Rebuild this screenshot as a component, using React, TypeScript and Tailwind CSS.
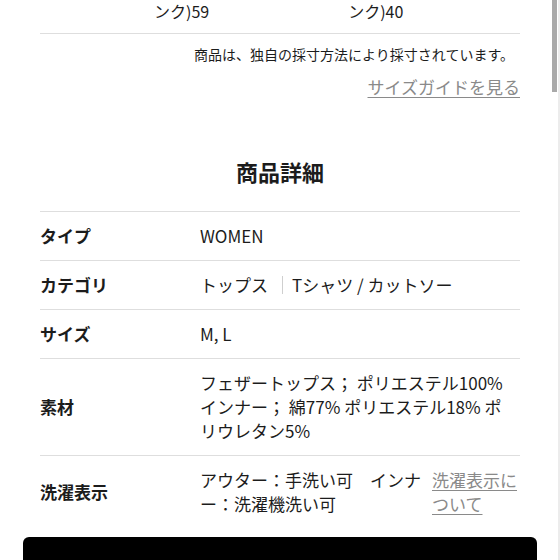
import React from 'react';

const rows: { label: string; value: React.ReactNode; link?: string }[] = [
  { label: 'タイプ', value: 'WOMEN' },
  {
    label: 'カテゴリ',
    value: (
      <span className="flex items-center">
        <span>トップス</span>
        <span className="ml-[14px] mr-[9px] inline-block h-[18px] w-px bg-[#cfcfcf]" />
        <span>Tシャツ / カットソー</span>
      </span>
    ),
  },
  { label: 'サイズ', value: 'M, L' },
  { label: '素材', value: 'フェザートップス； ポリエステル100% インナー； 綿77% ポリエステル18% ポリウレタン5%' },
  { label: '洗濯表示', value: 'アウター：手洗い可　インナー：洗濯機洗い可', link: '洗濯表示について' },
];

export default function App() {
  return (
    <div
      className="relative h-[560px] w-[560px] overflow-hidden bg-white text-[#1c1c1c]"
      style={{ fontFamily: '"Noto Sans CJK JP", "Noto Sans", sans-serif' }}
    >
      <div className="px-10">
        {/* size table tail */}
        <div className="flex h-[34px] border-b border-[#dedede] text-[16px] leading-[22px]">
          <span className="ml-[114px]">ンク)59</span>
          <span className="ml-[139px]">ンク)40</span>
        </div>

        <p className="mt-[10px] pr-[6px] text-right text-[14px] leading-[20px]">
          商品は、独自の採寸方法により採寸されています。
        </p>
        <div className="mt-[11px] text-right text-[17px] leading-[24px]">
          <a className="text-[#8a8a8a] underline underline-offset-[3px]">サイズガイドを見る</a>
        </div>

        <h2 className="mt-[57px] text-center text-[22px] font-bold leading-[30px]">商品詳細</h2>

        {/* details table */}
        <div className="mt-[25px] border-t border-[#dedede]">
          {rows.map((r, i) => (
            <div
              key={r.label}
              className={`flex items-center py-3 text-[17px] leading-[24px] ${
                i < rows.length - 1 ? 'border-b border-[#dedede]' : ''
              }`}
            >
              <div className="w-[160px] shrink-0 font-bold">{r.label}</div>
              <div className={r.link ? 'w-[228px] shrink-0' : 'w-[312px] shrink-0'}>{r.value}</div>
              {r.link && (
                <a className="ml-[4px] w-[88px] text-[#8a8a8a] underline underline-offset-[3px]">{r.link}</a>
              )}
            </div>
          ))}
        </div>
      </div>

      {/* bottom action bar */}
      <div className="mx-[23px] mt-[9px] h-[40px] rounded-t-[6px] bg-black" />

      {/* scrollbar */}
      <div className="absolute right-[3px] top-0 h-[92px] w-[5px] bg-[#a9a9a9]" />
      <div className="absolute right-0 top-0 h-full w-[2px] bg-[#ececec]" />
    </div>
  );
}
